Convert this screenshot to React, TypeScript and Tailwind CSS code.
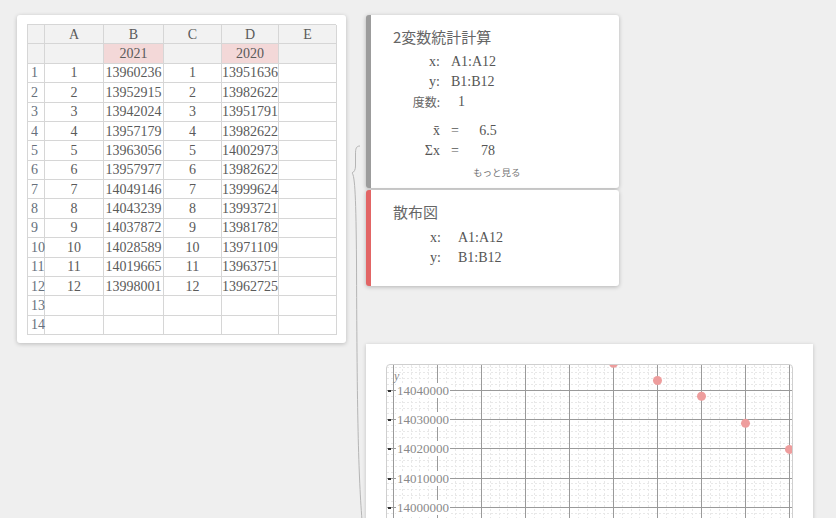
import React from 'react'

const serif = "font-['Liberation_Serif','DejaVu_Serif',serif]"
const jp = "font-['Noto_Sans_CJK_JP','Noto_Sans',sans-serif]"

const colWidths = ['w-[17px]', 'w-[59px]', 'w-[60px]', 'w-[58px]', 'w-[57px]', 'w-[58px]']

const data: (number | string)[][] = [
  [1, 13960236, 1, 13951636],
  [2, 13952915, 2, 13982622],
  [3, 13942024, 3, 13951791],
  [4, 13957179, 4, 13982622],
  [5, 13963056, 5, 14002973],
  [6, 13957977, 6, 13982622],
  [7, 14049146, 7, 13999624],
  [8, 14043239, 8, 13993721],
  [9, 14037872, 9, 13981782],
  [10, 14028589, 10, 13971109],
  [11, 14019665, 11, 13963751],
  [12, 13998001, 12, 13962725],
  ['', '', '', ''],
  ['', '', '', ''],
]

function Cell({ i, className = '', children }: { i: number; className?: string; children?: React.ReactNode }) {
  return (
    <div
      className={`${colWidths[i]} shrink-0 h-full border-r border-b border-[#d6d6d6] flex items-center ${
        i === 0 ? 'justify-start pl-[3px]' : 'justify-center'
      } ${className}`}
    >
      {children}
    </div>
  )
}

function Sheet() {
  return (
    <div className="w-[329px] shrink-0 self-start bg-white rounded-[3px] shadow-[0_1px_4px_rgba(0,0,0,0.22)] pt-[9px] pb-[8px] pl-[10px]">
      <div className={`w-[309px] border-l border-t border-[#d6d6d6] text-[14px] text-[#5a5a5a] ${serif}`}>
        <div className="flex h-[19.375px] bg-[#f2f2f2]">
          <Cell i={0} />
          {['A', 'B', 'C', 'D', 'E'].map((c, k) => (
            <Cell key={c} i={k + 1}>
              {c}
            </Cell>
          ))}
        </div>
        <div className="flex h-[19.375px] bg-[#f2f2f2]">
          <Cell i={0} />
          <Cell i={1} />
          <Cell i={2} className="bg-[#f3d8d8]">
            2021
          </Cell>
          <Cell i={3} />
          <Cell i={4} className="bg-[#f3d8d8]">
            2020
          </Cell>
          <Cell i={5} />
        </div>
        {data.map((r, n) => (
          <div key={n} className="flex h-[19.375px]">
            <Cell i={0} className="text-[#66707c]">
              {n + 1}
            </Cell>
            {r.map((v, k) => (
              <Cell key={k} i={k + 1}>
                {v}
              </Cell>
            ))}
            <Cell i={5} />
          </div>
        ))}
      </div>
    </div>
  )
}

function StatsCard() {
  return (
    <div className="w-[253px] h-[173px] bg-white rounded-[3px] border-l-[5px] border-[#9c9c9c] shadow-[0_1px_4px_rgba(0,0,0,0.25)] pt-[12px]">
      <div className={`pl-[22px] text-[15px] leading-[20px] text-[#666] ${jp}`}>2変数統計計算</div>
      <div className={`mt-[5px] grid grid-cols-[69px_auto] gap-x-[11px] text-[14px] leading-[20px] text-[#555] ${serif}`}>
        <div className="text-right">x:</div>
        <div>A1:A12</div>
        <div className="text-right">y:</div>
        <div>B1:B12</div>
        <div className={`text-right text-[12px] text-[#666] ${jp}`}>度数:</div>
        <div className="pl-[7px]">1</div>
      </div>
      <div className={`mt-[9px] grid grid-cols-[69px_auto] gap-x-[11px] text-[14px] leading-[20px] text-[#555] ${serif}`}>
        <div className="text-right">x&#772;</div>
        <div className="flex">
          <span>=</span>
          <span className="w-[58px] text-center">6.5</span>
        </div>
        <div className="text-right">Σx</div>
        <div className="flex">
          <span>=</span>
          <span className="w-[58px] text-center">78</span>
        </div>
      </div>
      <div className={`mt-[1px] pl-[102px] text-[9.5px] leading-[20px] text-[#777] ${jp}`}>もっと見る</div>
    </div>
  )
}

function ScatterCard() {
  return (
    <div className="w-[253px] h-[96px] mt-[2px] bg-white rounded-[3px] border-l-[5px] border-[#e26565] shadow-[0_1px_4px_rgba(0,0,0,0.25)] pt-[12px]">
      <div className={`pl-[22px] text-[15px] leading-[20px] text-[#666] ${jp}`}>散布図</div>
      <div className={`mt-[6px] grid grid-cols-[70px_auto] gap-x-[17px] text-[14px] leading-[20px] text-[#555] ${serif}`}>
        <div className="text-right">x:</div>
        <div>A1:A12</div>
        <div className="text-right">y:</div>
        <div>B1:B12</div>
      </div>
    </div>
  )
}

const xr = (v: number) => 44 * v - 82
const yr = (v: number) => 25 + (14040000 - v) * 0.00292

const points: [number, number][] = [
  [1, 13960236],
  [2, 13952915],
  [3, 13942024],
  [4, 13957179],
  [5, 13963056],
  [6, 13957977],
  [7, 14049146],
  [8, 14043239],
  [9, 14037872],
  [10, 14028589],
  [11, 14019665],
  [12, 13998001],
]

function Chart() {
  const minorX: number[] = []
  const majorX: number[] = []
  for (let i = 9; i <= 57; i++) {
    if (i % 5 === 0) majorX.push(i / 5)
    else minorX.push(i / 5)
  }
  const minorY: number[] = []
  const majorY: number[] = []
  for (let v = 13980000; v <= 14050000; v += 2000) {
    if (v % 10000 === 0) majorY.push(v)
    else minorY.push(v)
  }
  const labels = [14040000, 14030000, 14020000, 14010000, 14000000]
  return (
    <svg width="405" height="170" className="block">
      {minorX.map((v) => (
        <line key={'mx' + v} x1={Math.round(xr(v)) + 0.5} x2={Math.round(xr(v)) + 0.5} y1={0} y2={170} stroke="#e8e8e8" strokeDasharray="2 2" />
      ))}
      {minorY.map((v) => (
        <line key={'my' + v} y1={Math.round(yr(v)) + 0.5} y2={Math.round(yr(v)) + 0.5} x1={0} x2={405} stroke="#e8e8e8" strokeDasharray="2 2" />
      ))}
      {majorX.map((v) => (
        <line key={'Mx' + v} x1={Math.round(xr(v)) + 0.5} x2={Math.round(xr(v)) + 0.5} y1={0} y2={170} stroke="#9a9a9a" />
      ))}
      {majorY.map((v) => (
        <line key={'My' + v} y1={Math.round(yr(v)) + 0.5} y2={Math.round(yr(v)) + 0.5} x1={0} x2={405} stroke="#9a9a9a" />
      ))}
      {labels.map((v) => (
        <g key={'L' + v}>
          <rect x={9} y={Math.round(yr(v)) - 7} width={54} height={15} fill="white" />
          <rect x={1} y={Math.round(yr(v))} width={3} height={2} fill="#333" />
          <text
            x={10}
            y={Math.round(yr(v)) + 5}
            fontSize="13"
            fill="#8a8a8a"
            fontFamily="'Liberation Serif', 'DejaVu Serif', serif"
          >
            {v}
          </text>
        </g>
      ))}
      <text x={7} y={15} fontSize="12" fontStyle="italic" fill="#8a8a8a" fontFamily="'Liberation Serif', serif">
        y
      </text>
      {points.map(([x, y]) => (
        <circle key={x} cx={xr(x) + 0.5} cy={yr(y)} r={4.5} fill="#ee9d9d" />
      ))}
    </svg>
  )
}

function ChartCard() {
  return (
    <div className="w-[447px] h-[200px] mt-[58px] bg-white shadow-[0_1px_4px_rgba(0,0,0,0.2)] pt-[20px] pl-[20px]">
      <div className="w-[407px] h-[180px] border border-[#cfcfcf] rounded-[4px] overflow-hidden">
        <Chart />
      </div>
    </div>
  )
}

export default function App() {
  return (
    <div className="relative w-[836px] h-[518px] overflow-hidden bg-[#efefef]">
      <div className="flex gap-[20px] pl-[17px] pt-[15px]">
        <Sheet />
        <div className="flex flex-col">
          <StatsCard />
          <ScatterCard />
          <ChartCard />
        </div>
      </div>
      <svg className="absolute left-0 top-0 pointer-events-none" width="836" height="518">
        <path
          d="M 360 146 C 356 146, 355.5 149, 355.5 154 L 355.5 166 C 355.5 170, 354 172, 352 173 C 355 175, 356 200, 356.5 260 C 357 400, 358 470, 362 520"
          fill="none"
          stroke="#b5b5b5"
          strokeWidth="1"
        />
      </svg>
    </div>
  )
}
